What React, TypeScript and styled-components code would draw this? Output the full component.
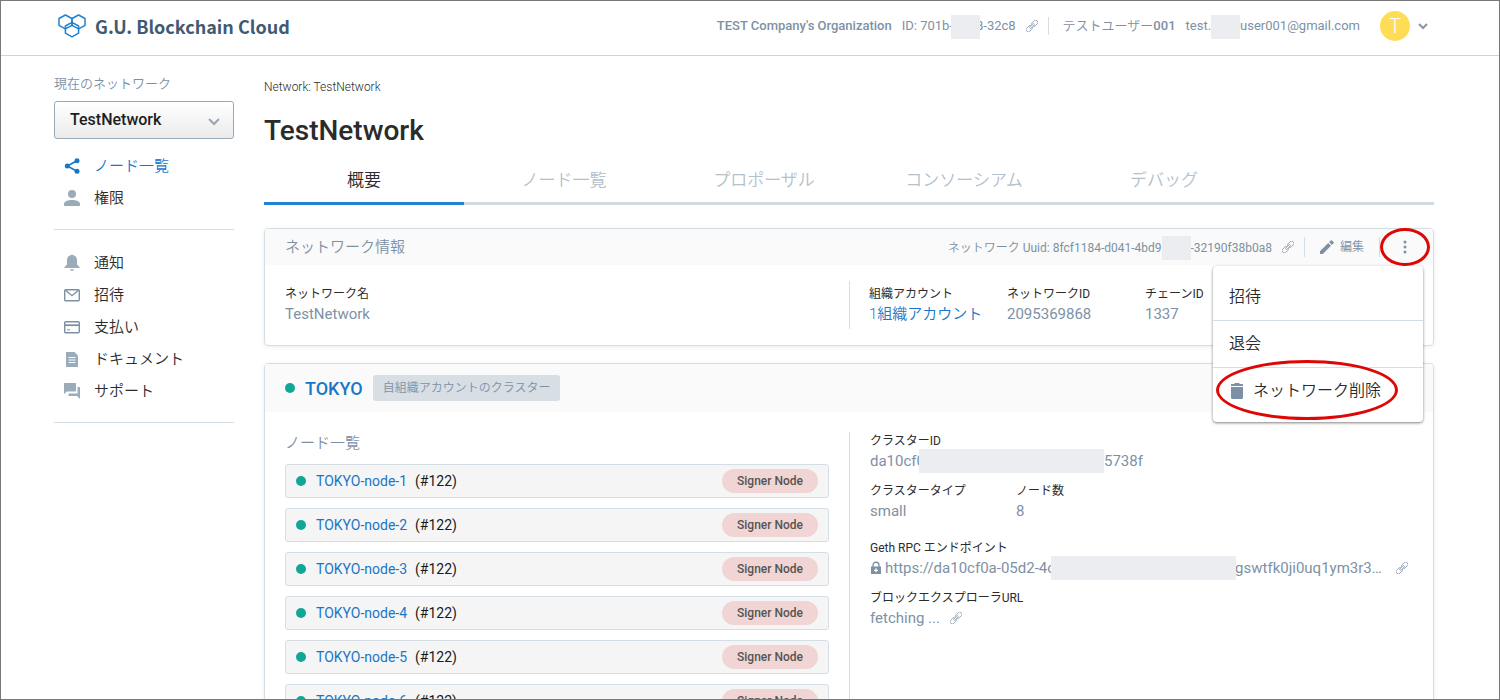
import React from "react";
import styled, { createGlobalStyle, css } from "styled-components";

const c = {
  ink: "#2b2b2b",
  muted: "#7d91a5",
  icon: "#9aabb9",
  link: "#1976c8",
  line: "#d5dee5",
  green: "#12a696",
  mask: "#ecedf0",
  red: "#dd0806",
};

const GlobalStyle = createGlobalStyle`
  *, *::before, *::after { box-sizing: border-box; }
  body {
    margin: 0;
    background: #fff;
    color: ${c.ink};
    font-family: Roboto, "Noto Sans CJK JP", sans-serif;
    font-size: 15px;
    font-weight: 400;
  }
  a { color: inherit; text-decoration: none; }
  button { font: inherit; color: inherit; background: none; border: 0; padding: 0; cursor: pointer; }
  ul, dl, dd, h1, h2, h3, p { margin: 0; padding: 0; list-style: none; }
  svg { display: block; flex: none; }
`;

const Frame = styled.div`
  height: 100vh;
  overflow: hidden;
  border: 1px solid #787878;
`;

const Header = styled.header`
  display: flex;
  align-items: center;
  justify-content: space-between;
  height: 55px;
  padding: 0 71px 4px 57px;
  border-bottom: 1px solid #d0d3d6;
`;

const Brand = styled.a`
  display: flex;
  align-items: center;
  gap: 9px;
  color: #3f5b73;
  font: 700 18px/24px "Noto Sans CJK JP", sans-serif;
`;

const Account = styled.div`
  display: flex;
  align-items: center;
  gap: 10px;
  color: ${c.muted};
  font-size: 13px;
  line-height: 20px;
  white-space: nowrap;
`;

const Strong = styled.span`
  font-weight: 500;
`;

const UserName = styled.span`
  font-weight: 500;
  margin-left: 4px;
`;

const Cjk = styled.span`
  font-weight: 350;
`;

const VLine = styled.span<{ $h: number }>`
  width: 1px;
  height: ${(p) => p.$h}px;
  background: ${c.line};
`;

const Mask = styled.span<{ $w: number; $l?: number; $r?: number }>`
  position: relative;
  display: inline-block;
  flex: none;
  width: ${(p) => p.$w}px;
  height: 24px;
  margin: -4px ${(p) => -(p.$r ?? 0)}px -4px ${(p) => -(p.$l ?? 0)}px;
  vertical-align: middle;
  background: ${c.mask};
`;

const IconButton = styled.button`
  display: inline-flex;
  align-items: center;
  justify-content: center;
`;

const AvatarButton = styled.button`
  display: flex;
  align-items: center;
  gap: 8px;
  margin-left: 10px;
`;

const Avatar = styled.span`
  display: grid;
  place-items: center;
  width: 30px;
  height: 30px;
  border-radius: 50%;
  background: #ffdc55;
  color: #fff;
  font-size: 20px;
  font-weight: 300;
`;

const Layout = styled.div`
  display: flex;
  align-items: flex-start;
  gap: 30px;
  padding: 0 65px 0 53px;
`;

const Sidebar = styled.nav`
  flex: 0 0 180px;
  padding-top: 18px;
`;

const SideLabel = styled.label`
  display: block;
  color: ${c.muted};
  font-size: 13px;
  font-weight: 350;
  line-height: 20px;
`;

const SelectBox = styled.div`
  position: relative;
  margin: 7px 0 11px;
  svg { position: absolute; right: 14px; top: 17px; pointer-events: none; }
`;

const NetworkSelect = styled.select`
  display: block;
  appearance: none;
  width: 100%;
  height: 38px;
  padding: 0 36px 2px 15px;
  border: 1px solid #98a8b7;
  border-radius: 3px;
  background: linear-gradient(#fff, #ebebeb);
  color: #1e1e1e;
  font: 500 16px Roboto, "Noto Sans CJK JP", sans-serif;
`;

const SideList = styled.ul`
  padding-bottom: 15px;
  margin-bottom: 17px;
  border-bottom: 1px solid ${c.line};
`;

const Caption = styled.span`
  padding-bottom: 4px;
`;

const SideLink = styled.a<{ $active?: boolean }>`
  display: flex;
  align-items: center;
  gap: 14px;
  height: 32px;
  padding-left: 10px;
  font-weight: 350;
  color: ${(p) => (p.$active ? c.link : c.ink)};
  svg { color: ${(p) => (p.$active ? c.link : c.icon)}; }
`;

const Main = styled.main`
  flex: 1;
  min-width: 0;
  padding-top: 21px;
`;

const Crumb = styled.p`
  font-size: 12px;
  font-weight: 300;
  line-height: 20px;
`;

const Title = styled.h1`
  margin-top: 16px;
  font-size: 28px;
  font-weight: 500;
  line-height: 36px;
`;

const Tabs = styled.div`
  display: flex;
  margin: 6px 0 23px;
  border-bottom: 3px solid #d2dae1;
`;

const Tab = styled.button<{ $active?: boolean }>`
  flex: 0 0 200px;
  height: 50px;
  margin-bottom: -3px;
  border-bottom: 3px solid transparent;
  font-size: 17px;
  font-weight: 350;
  color: #b4c0cb;
  ${(p) => p.$active && css`
    color: ${c.ink};
    border-color: #2083d5;
  `}
`;

const Card = styled.section`
  margin-bottom: 17px;
  border: 1px solid ${c.line};
  border-radius: 4px;
  box-shadow: 0 1px 4px rgba(0, 0, 0, 0.08);
`;

const CardHead = styled.div<{ $h: number }>`
  display: flex;
  align-items: center;
  height: ${(p) => p.$h}px;
  padding: 0 4px 0 20px;
  border-radius: 3px 3px 0 0;
  background: #fafafa;
`;

const SectionName = styled.h2`
  color: ${c.muted};
  font-size: 15px;
  font-weight: 350;
  line-height: 22px;
`;

const HeadTools = styled.div`
  display: flex;
  align-items: center;
  margin-left: auto;
  color: ${c.muted};
  font-size: 12px;
  white-space: nowrap;
`;

const Uuid = styled.span`
  margin-right: 10px;
`;

const EditButton = styled.button`
  display: flex;
  align-items: center;
  gap: 6px;
  padding: 0 15px;
  font-weight: 350;
`;

const MoreWrap = styled.div`
  position: relative;
  width: 49px;
  height: 36px;
`;

const MoreButton = styled.button`
  display: grid;
  place-items: center;
  width: 100%;
  height: 100%;
`;

const Ring = styled.span<{ $w: number; $h: number; $x: number; $y: number }>`
  position: absolute;
  left: ${(p) => p.$x}px;
  top: ${(p) => p.$y}px;
  width: ${(p) => p.$w}px;
  height: ${(p) => p.$h}px;
  border: 3px solid ${c.red};
  border-radius: 50%;
  pointer-events: none;
`;

const Menu = styled.ul`
  position: absolute;
  z-index: 5;
  top: 37px;
  right: 6px;
  width: 210px;
  padding: 8px 0;
  border-radius: 4px;
  background: #fff;
  box-shadow: 0 1px 3px rgba(0, 0, 0, 0.5);
`;

const MenuItem = styled.li`
  position: relative;
  & + & { border-top: 1px solid ${c.line}; }
`;

const MenuButton = styled.button`
  display: flex;
  align-items: center;
  gap: 8px;
  width: 100%;
  height: 46px;
  padding: 0 16px;
  color: ${c.ink};
  font-size: 16px;
  font-weight: 350;
`;

const CardBody = styled.div<{ $pad: number }>`
  display: grid;
  grid-template-columns: 1fr 1fr;
  padding: ${(p) => p.$pad}px 20px;
`;

const InfoCell = styled.div<{ $ruled?: boolean }>`
  display: flex;
  align-items: center;
  height: 48px;
  ${(p) => p.$ruled && css`
    padding-left: 19px;
    border-left: 1px solid ${c.line};
  `}
`;

const FieldBox = styled.dl<{ $w?: number }>`
  flex: none;
  width: ${(p) => (p.$w ? `${p.$w}px` : "auto")};
  white-space: nowrap;
  dt { font-size: 12px; font-weight: 400; line-height: 18px; }
  dd { color: ${c.muted}; line-height: 22px; display: flex; align-items: center; }
`;

const BlueLink = styled.a`
  color: ${c.link};
  font-weight: 350;
`;

const Dot = styled.span`
  flex: none;
  width: 10px;
  height: 10px;
  border-radius: 50%;
  background: ${c.green};
`;

const ClusterName = styled.h2`
  margin: 0 10px;
  color: ${c.link};
  font-size: 18px;
  font-weight: 500;
`;

const Tag = styled.span`
  padding: 0 10px;
  border-radius: 3px;
  background: #d7dee4;
  color: ${c.muted};
  font-size: 12px;
  font-weight: 350;
  line-height: 26px;
`;

const Nodes = styled.div`
  padding-right: 20px;
`;

const NodeList = styled.ul`
  display: grid;
  gap: 10px;
  margin-top: 10px;
`;

const NodeRow = styled.li`
  display: flex;
  align-items: center;
  height: 34px;
  padding: 0 10px;
  border: 1px solid ${c.line};
  border-radius: 3px;
  background: #f5f5f5;
  color: #1a1a1a;
  font-size: 14px;
  a { margin: 0 8px 0 10px; color: ${c.link}; }
`;

const Badge = styled.span`
  margin-left: auto;
  padding: 0 15px;
  border-radius: 12px;
  background: #f0d5d4;
  color: #555;
  font-size: 12px;
  font-weight: 500;
  line-height: 24px;
`;

const Cluster = styled.div`
  display: grid;
  align-content: start;
  gap: 10px;
  padding-left: 20px;
  border-left: 1px solid ${c.line};
`;

const FieldRow = styled.div<{ $spaced?: boolean }>`
  display: flex;
  padding-bottom: ${(p) => (p.$spaced ? 7 : 0)}px;
`;

const Gap = styled.span<{ $w: number }>`
  flex: none;
  width: ${(p) => p.$w}px;
`;

function LogoMark() {
  return (
    <svg width="28" height="24" viewBox="0 0 28 24" fill="none" stroke="#2380cc" strokeWidth="1.5" strokeLinejoin="round">
      <path d="M7.4 1 14 4.500V11.300L7.400 14.800 1 11.300V4.500Z" />
      <path d="M20.600 1 27 4.500V11.300L20.600 14.800 14 11.300V4.500Z" />
      <path d="M14 8.400 20.600 12V19.200L14 22.800 7.400 19.200V12Z" />
    </svg>
  );
}

function ChainIcon() {
  return (
    <svg width="12" height="12" viewBox="0 0 12 12" fill="none" stroke="#8496a8" strokeWidth="0.8">
      <g transform="rotate(-45 6 6)">
        <rect x="-1.400" y="3.800" width="6.800" height="4.400" rx="1.900" />
        <rect x="6.600" y="3.800" width="6.800" height="4.400" rx="1.900" />
        <rect x="3" y="5.200" width="6" height="1.600" rx=".8" fill="#fff" strokeWidth="0.700" />
      </g>
    </svg>
  );
}

function Chevron({ w, color, weight }: { w: number; color: string; weight: number }) {
  return (
    <svg width={w} height={w / 2 + 2} viewBox={`0 0 ${w} ${w / 2 + 2}`} fill="none" stroke={color} strokeWidth={weight}>
      <path d={`M1 1 ${w / 2} ${w / 2} ${w - 1} 1`} />
    </svg>
  );
}

const glyphs: Record<string, React.ReactNode> = {
  share: (
    <>
      <circle cx="13" cy="2.8" r="2.5" />
      <circle cx="3.3" cy="8" r="2.5" />
      <circle cx="13" cy="13.2" r="2.5" />
      <path d="M13 2.8 3.3 8 13 13.2" fill="none" stroke="currentColor" strokeWidth="1.6" />
    </>
  ),
  person: (
    <>
      <circle cx="8" cy="4" r="4" />
      <path d="M0 16V14C0 11.300 4 10 8 10S16 11.300 16 14V16Z" />
    </>
  ),
  bell: <path d="M8 0C4.800 0 3 2.300 3 5.200V9.500L.5 12V13H15.500V12L13 9.500V5.200C13 2.300 11.200 0 8 0ZM6 14.300H10C10 15.300 9 15.900 8 15.900S6 15.300 6 14.300Z" />,
  mail: (
    <g fill="none" stroke={c.muted} strokeWidth="1.400">
      <rect x=".7" y="2.700" width="14.600" height="11" rx="1" />
      <path d="M1.500 3.300 8 8.700 14.500 3.300" />
    </g>
  ),
  card: (
    <g fill="none" stroke={c.muted} strokeWidth="1.400">
      <rect x=".7" y="2.700" width="14.600" height="11" rx="1" />
      <path d="M1 6.200H15" strokeWidth="1.800" />
      <path d="M3 10.800H6" strokeWidth="1" />
    </g>
  ),
  doc: (
    <>
      <path d="M2 1H10.500L14 4.500V16H2Z" />
      <path d="M4.500 6.500H11.500M4.500 9H11.500M4.500 11.500H11.500" stroke="#fff" strokeWidth="1" />
    </>
  ),
  chat: <path d="M1 0H11C11.600 0 12 .4 12 1V7.500C12 8.100 11.600 8.500 11 8.500H3L0 11V1C0 .4.4 0 1 0ZM13.500 4H15C15.600 4 16 4.400 16 5V16L13 13H5.500C4.900 13 4.500 12.600 4.500 12V10.500H13.500Z" />,
};

function Glyph({ name }: { name: string }) {
  return (
    <svg width="16" height="16" viewBox="0 0 16 16" fill="currentColor" aria-hidden>
      {glyphs[name]}
    </svg>
  );
}

function CopyButton() {
  return (
    <IconButton aria-label="コピー">
      <ChainIcon />
    </IconButton>
  );
}

function Field({ label, width, children }: { label: string; width?: number; children: React.ReactNode }) {
  return (
    <FieldBox $w={width}>
      <dt>{label}</dt>
      <dd>{children}</dd>
    </FieldBox>
  );
}

const primary = [
  { icon: "share", text: "ノード一覧", active: true },
  { icon: "person", text: "権限" },
];
const secondary = [
  { icon: "bell", text: "通知" },
  { icon: "mail", text: "招待" },
  { icon: "card", text: "支払い" },
  { icon: "doc", text: "ドキュメント" },
  { icon: "chat", text: "サポート" },
];
const tabs = ["概要", "ノード一覧", "プロポーザル", "コンソーシアム", "デバッグ"];

function SideGroup({ items }: { items: { icon: string; text: string; active?: boolean }[] }) {
  return (
    <SideList>
      {items.map((i) => (
        <li key={i.text}>
          <SideLink href="#" $active={i.active}>
            <Glyph name={i.icon} />
            <Caption>{i.text}</Caption>
          </SideLink>
        </li>
      ))}
    </SideList>
  );
}

function NetworkCard() {
  return (
    <Card>
      <CardHead $h={36}>
        <SectionName>ネットワーク情報</SectionName>
        <HeadTools>
          <Uuid>
            <Cjk>ネットワーク</Cjk> Uuid: 8fcf1184-d041-4bd9<Mask $w={29} />-32190f38b0a8
          </Uuid>
          <CopyButton />
          <Gap $w={10} />
          <VLine $h={20} />
          <EditButton>
            <svg width="14" height="14" viewBox="0 0 14 14" fill={c.muted}>
              <path d="M0 11.200V14H2.800L11 5.800 8.200 3ZM13.600 3.200C13.900 2.900 13.900 2.400 13.600 2.100L11.900.4C11.600.1 11.100.1 10.800.4L9.100 2.100 11.900 4.900Z" />
            </svg>
            <Caption>編集</Caption>
          </EditButton>
          <VLine $h={20} />
          <MoreWrap>
            <MoreButton aria-label="メニュー">
              <svg width="4" height="14" viewBox="0 0 4 14" fill={c.muted}>
                <circle cx="2" cy="2" r="1.500" />
                <circle cx="2" cy="7" r="1.500" />
                <circle cx="2" cy="12" r="1.500" />
              </svg>
            </MoreButton>
            <Ring $w={50} $h={38} $x={0} $y={-1} />
            <Menu>
              <MenuItem><MenuButton><Caption>招待</Caption></MenuButton></MenuItem>
              <MenuItem><MenuButton><Caption>退会</Caption></MenuButton></MenuItem>
              <MenuItem>
                <MenuButton>
                  <svg width="16" height="16" viewBox="0 0 16 16" fill={c.muted}>
                    <path d="M2 4H14V14.500C14 15.300 13.300 16 12.500 16H3.500C2.700 16 2 15.300 2 14.500ZM2 1H5L6 0H10L11 1H14V3H2Z" />
                  </svg>
                  <Caption>ネットワーク削除</Caption>
                </MenuButton>
                <Ring $w={182} $h={60} $x={3} $y={-8} />
              </MenuItem>
            </Menu>
          </MoreWrap>
        </HeadTools>
      </CardHead>
      <CardBody $pad={16}>
        <InfoCell>
          <Field label="ネットワーク名">TestNetwork</Field>
        </InfoCell>
        <InfoCell $ruled>
          <Field label="組織アカウント" width={138}><BlueLink href="#">1組織アカウント</BlueLink></Field>
          <Field label="ネットワークID" width={138}>2095369868</Field>
          <Field label="チェーンID">1337</Field>
        </InfoCell>
      </CardBody>
    </Card>
  );
}

function ClusterCard() {
  return (
    <Card>
      <CardHead $h={48}>
        <Dot />
        <ClusterName>TOKYO</ClusterName>
        <Tag>自組織アカウントのクラスター</Tag>
      </CardHead>
      <CardBody $pad={20}>
        <Nodes>
          <SectionName as="h3">ノード一覧</SectionName>
          <NodeList>
            {[1, 2, 3, 4, 5, 6, 7, 8].map((n) => (
              <NodeRow key={n}>
                <Dot />
                <a href="#">TOKYO-node-{n}</a>
                (#122)
                <Badge>Signer Node</Badge>
              </NodeRow>
            ))}
          </NodeList>
        </Nodes>
        <Cluster>
          <Field label="クラスターID">
            da10cf0
            <Mask $w={185} $l={6} />
            5738f
          </Field>
          <FieldRow $spaced>
            <Field label="クラスタータイプ" width={146}>small</Field>
            <Field label="ノード数">8</Field>
          </FieldRow>
          <Field label="Geth RPC エンドポイント">
            <svg width="12" height="14" viewBox="0 0 12 14">
              <path d="M3 6V4C3 .3 9 .3 9 4V6" fill="none" stroke={c.muted} strokeWidth="1.300" />
              <path d="M1 5.500H11V13H1Z" fill={c.muted} />
              <path d="M6 7.300V11.300M4 9.300H8" stroke="#fff" strokeWidth="1.200" />
            </svg>
            <Gap $w={3} />
            https://da10cf0a-05d2-4c
            <Mask $w={185} $l={4} $r={1} />
            gswtfk0ji0uq1ym3r3…
            <Gap $w={14} />
            <CopyButton />
          </Field>
          <Field label="ブロックエクスプローラURL">
            fetching ...
            <Gap $w={10} />
            <CopyButton />
          </Field>
        </Cluster>
      </CardBody>
    </Card>
  );
}

export default function App() {
  return (
    <>
      <GlobalStyle />
      <Frame>
        <Header>
          <Brand href="#">
            <LogoMark />
            G.U. Blockchain Cloud
          </Brand>
          <Account>
            <Strong>TEST Company's Organization</Strong>
            <span>
              ID: 701b-<Mask $w={29} $l={2} $r={4} />8-32c8
            </span>
            <CopyButton />
            <VLine $h={18} />
            <UserName><Cjk>テストユーザー</Cjk>001</UserName>
            <span>
              test.<Mask $w={29} />user001@gmail.com
            </span>
            <AvatarButton aria-label="アカウント">
              <Avatar>T</Avatar>
              <Chevron w={10} color="#8796a6" weight={2} />
            </AvatarButton>
          </Account>
        </Header>
        <Layout>
          <Sidebar>
            <SideLabel htmlFor="network">現在のネットワーク</SideLabel>
            <SelectBox>
              <NetworkSelect id="network">
                <option>TestNetwork</option>
              </NetworkSelect>
              <Chevron w={12} color="#98a6b4" weight={2} />
            </SelectBox>
            <SideGroup items={primary} />
            <SideGroup items={secondary} />
          </Sidebar>
          <Main>
            <Crumb>Network: TestNetwork</Crumb>
            <Title>TestNetwork</Title>
            <Tabs role="tablist">
              {tabs.map((t, i) => (
                <Tab key={t} role="tab" aria-selected={i === 0} $active={i === 0}>{t}</Tab>
              ))}
            </Tabs>
            <NetworkCard />
            <ClusterCard />
          </Main>
        </Layout>
      </Frame>
    </>
  );
}
